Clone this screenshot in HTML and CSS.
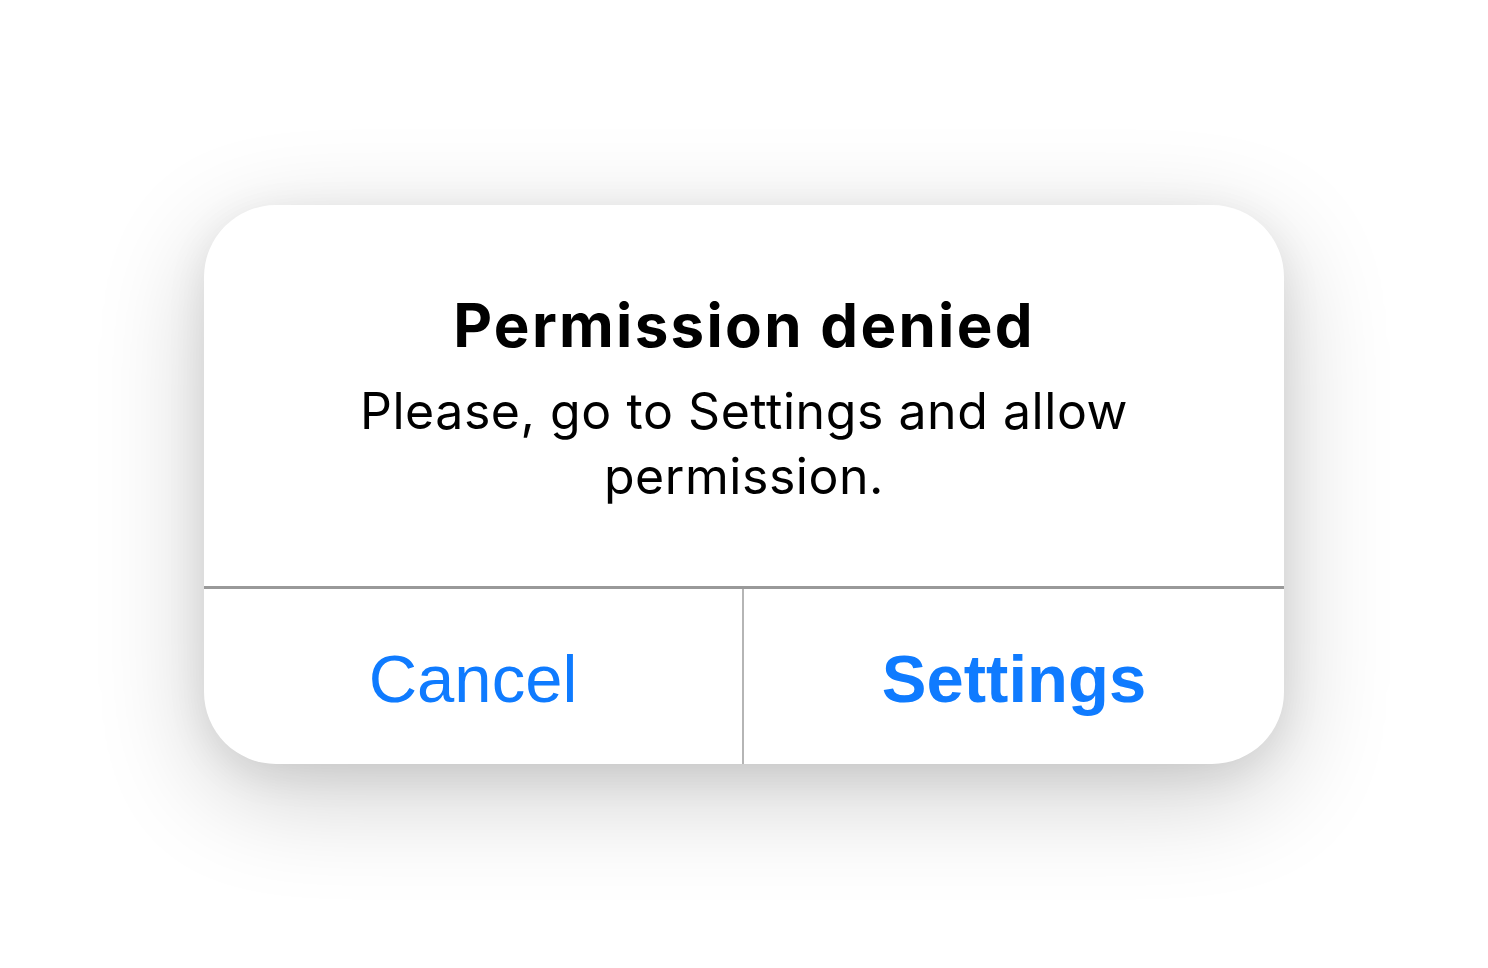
FILE: index.html
```html
<!DOCTYPE html>
<html lang="en">
<head>
<meta charset="utf-8">
<title>Permission denied</title>
<link rel="stylesheet" href="styles.css">
</head>
<body>
<div class="alert" role="alertdialog">
  <div class="alert-content">
    <h1 class="alert-title">Permission denied</h1>
    <p class="alert-message">Please, go to Settings and allow permission.</p>
  </div>
  <div class="alert-actions">
    <button class="alert-btn alert-btn-cancel">Cancel</button>
    <button class="alert-btn alert-btn-primary">Settings</button>
  </div>
</div>
</body>
</html>
```
FILE: styles.css
```css
html, body {
  margin: 0;
  padding: 0;
  background: #ffffff;
}
body {
  width: 1488px;
  height: 968px;
  display: flex;
  align-items: center;
  justify-content: center;
  font-family: Inter, Roboto, "Liberation Sans", sans-serif;
}
.alert {
  width: 1080px;
  height: 559px;
  background: #ffffff;
  border-radius: 72px;
  box-shadow: 0 30px 110px rgba(0, 0, 0, 0.2), 0 10px 40px rgba(0, 0, 0, 0.08);
  display: flex;
  flex-direction: column;
  overflow: hidden;
}
.alert-content {
  height: 384px;
  box-sizing: border-box;
  padding: 84px 90px 0;
  text-align: center;
  border-bottom: 3px solid #999999;
}
.alert-title {
  margin: 0;
  font-size: 60px;
  line-height: 72px;
  font-weight: 700;
  letter-spacing: 2.3px;
  color: #000000;
}
.alert-message {
  margin: 18px 0 0;
  font-size: 50px;
  line-height: 65px;
  font-weight: 400;
  letter-spacing: 0.55px;
  color: #000000;
}
.alert-actions {
  flex: 1;
  display: grid;
  grid-template-columns: 1fr 1fr;
}
.alert-btn {
  border: none;
  background: transparent;
  margin: 0;
  padding: 52px 0 46px;
  font-family: "Liberation Sans", Arial, sans-serif;
  font-size: 67px;
  line-height: 74px;
  color: #0f7bff;
  text-align: center;
}
.alert-btn-cancel {
  font-weight: 400;
  border-right: 2px solid #b5b5b5;
}
.alert-btn-primary {
  font-weight: 700;
}
```
